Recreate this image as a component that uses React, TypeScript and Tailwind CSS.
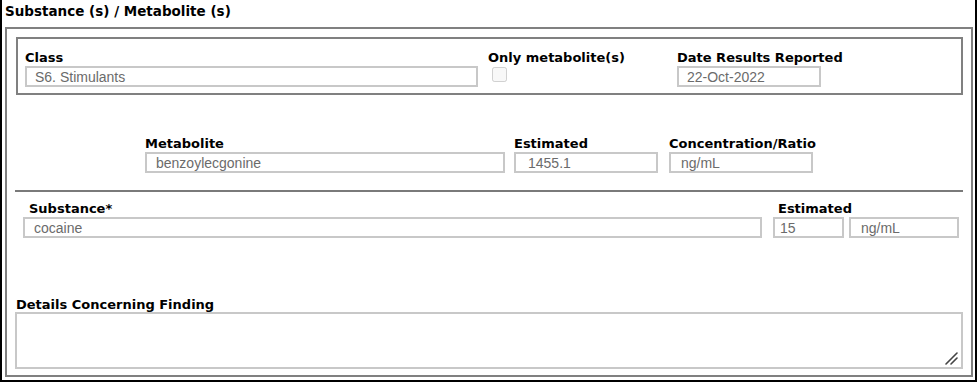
import React from "react";

const LABEL = "block text-[13px] leading-[15px] font-bold text-black font-['DejaVu_Sans',sans-serif] whitespace-nowrap";
const INPUT =
  "block h-[21px] border-2 border-[#c8c8c8] bg-white text-[14px] leading-[17px] text-[#6b6b6b] font-['Liberation_Sans',Arial,sans-serif] outline-none";

function Field({ label, value, width, labelPad = 0, pad = 8 }: { label?: string; value: string; width: number; labelPad?: number; pad?: number }) {
  return (
    <div>
      {label !== undefined && (
        <span className={LABEL} style={{ paddingLeft: labelPad }}>
          {label || "\u00a0"}
        </span>
      )}
      <input readOnly defaultValue={value} className={`${INPUT} mt-[1px]`} style={{ width, paddingLeft: pad }} />
    </div>
  );
}

export default function App() {
  return (
    <div className="w-[977px] h-[382px] bg-white border-x-2 border-b-2 border-black overflow-hidden">
      <div className="pl-[3px] pt-[4px] text-[13.5px] leading-[15px] font-bold font-['DejaVu_Sans',sans-serif]">
        Substance (s) / Metabolite (s)
      </div>

      <div className="ml-[3px] mt-[8px] w-[968px] h-[350px] border-2 border-[#808080]">
        {/* class box */}
        <div className="ml-[9px] mt-[8px] w-[947px] h-[58px] border-2 border-[#808080] flex pt-[11px]">
          <div className="ml-[7px] w-[463px]">
            <Field label="Class" value="S6. Stimulants" width={453} pad={8} />
          </div>
          <div className="w-[189px]">
            <span className={LABEL}>Only metabolite(s)</span>
            <input type="checkbox" disabled className="block ml-[4px] mt-[2px] w-[15px] h-[15px] m-0" />
          </div>
          <div>
            <Field label="Date Results Reported" value="22-Oct-2022" width={144} pad={8} />
          </div>
        </div>

        {/* metabolite row */}
        <div className="flex mt-[41px] ml-[138px]">
          <div className="w-[369px]">
            <Field label="Metabolite" value="benzoylecgonine" width={360} pad={9} />
          </div>
          <div className="w-[155px]">
            <Field label="Estimated" value="1455.1" width={144} pad={12} />
          </div>
          <div>
            <Field label="Concentration/Ratio" value="ng/mL" width={144} pad={10} />
          </div>
        </div>

        <div className="ml-[8px] mt-[17px] w-[948px] h-[2px] bg-[#7a7a7a]" />

        {/* substance row */}
        <div className="flex mt-[9px] ml-[16px]">
          <div className="w-[750px]">
            <Field label="Substance*" value="cocaine" width={739} labelPad={6} pad={9} />
          </div>
          <div className="w-[76px]">
            <Field label="Estimated" value="15" width={71} labelPad={5} pad={5} />
          </div>
          <div>
            <Field label="" value="ng/mL" width={110} pad={10} />
          </div>
        </div>

        {/* details */}
        <div className="ml-[8px] mt-[59px]">
          <span className={`${LABEL} pl-[1px]`}>Details Concerning Finding</span>
          <div className="relative w-[948px] h-[57px]">
            <textarea readOnly className="block w-[948px] h-[57px] border-2 border-[#c8c8c8] bg-white outline-none resize-none" />
            <svg className="absolute right-[5px] bottom-[4px]" width="13" height="13" viewBox="0 0 13 13">
              <path d="M1 12 L12 1 M6 12 L12 6" stroke="#444" strokeWidth="1.6" strokeLinecap="round" />
            </svg>
          </div>
        </div>
      </div>
    </div>
  );
}
